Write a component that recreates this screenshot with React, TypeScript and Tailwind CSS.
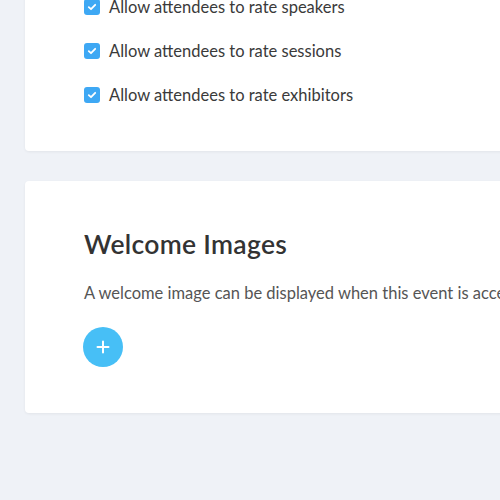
import React from "react";

function Check({ label }: { label: string }) {
  return (
    <div className="flex items-center h-6">
      <span className="w-4 h-4 rounded-[3px] bg-[#3ea8f4] flex items-center justify-center shrink-0">
        <svg width="10" height="10" viewBox="0 0 10 10" fill="none">
          <path d="M1.8 5.2 L4 7.2 L8.2 2.8" stroke="white" strokeWidth="1.8" strokeLinecap="round" strokeLinejoin="round" />
        </svg>
      </span>
      <span className="ml-[9px] text-[16.5px] text-[#3a3a3a] whitespace-nowrap">{label}</span>
    </div>
  );
}

export default function App() {
  return (
    <div
      className="h-[500px] w-[500px] overflow-hidden bg-[#eff2f7] pl-[25px]"
      style={{ fontFamily: "Lato, 'Noto Sans', sans-serif" }}
    >
      <div className="mt-[-45px] w-[700px] bg-white rounded-[4px] shadow-[0_1px_3px_rgba(0,0,0,0.06)] pl-[59px] pt-[40px] pb-[44px] flex flex-col gap-5">
        <Check label="Allow attendees to rate speakers" />
        <Check label="Allow attendees to rate sessions" />
        <Check label="Allow attendees to rate exhibitors" />
      </div>
      <div className="mt-[30px] w-[700px] bg-white rounded-[4px] shadow-[0_1px_3px_rgba(0,0,0,0.06)] pl-[59px] pt-[47px] pb-[46px]">
        <h2 className="text-[26.5px] leading-8 font-semibold tracking-[0.3px] text-[#333] whitespace-nowrap">Welcome Images</h2>
        <p className="mt-[21px] text-[16.5px] leading-6 text-[#555] whitespace-nowrap">
          A welcome image can be displayed when this event is accessed by attendees.
        </p>
        <button className="mt-[22px] w-10 h-10 rounded-full bg-[#47bff6] flex items-center justify-center -ml-px">
          <svg width="14" height="14" viewBox="0 0 14 14">
            <path d="M7 1.5 V12.5 M1.5 7 H12.5" stroke="white" strokeWidth="2" strokeLinecap="round" />
          </svg>
        </button>
      </div>
    </div>
  );
}
